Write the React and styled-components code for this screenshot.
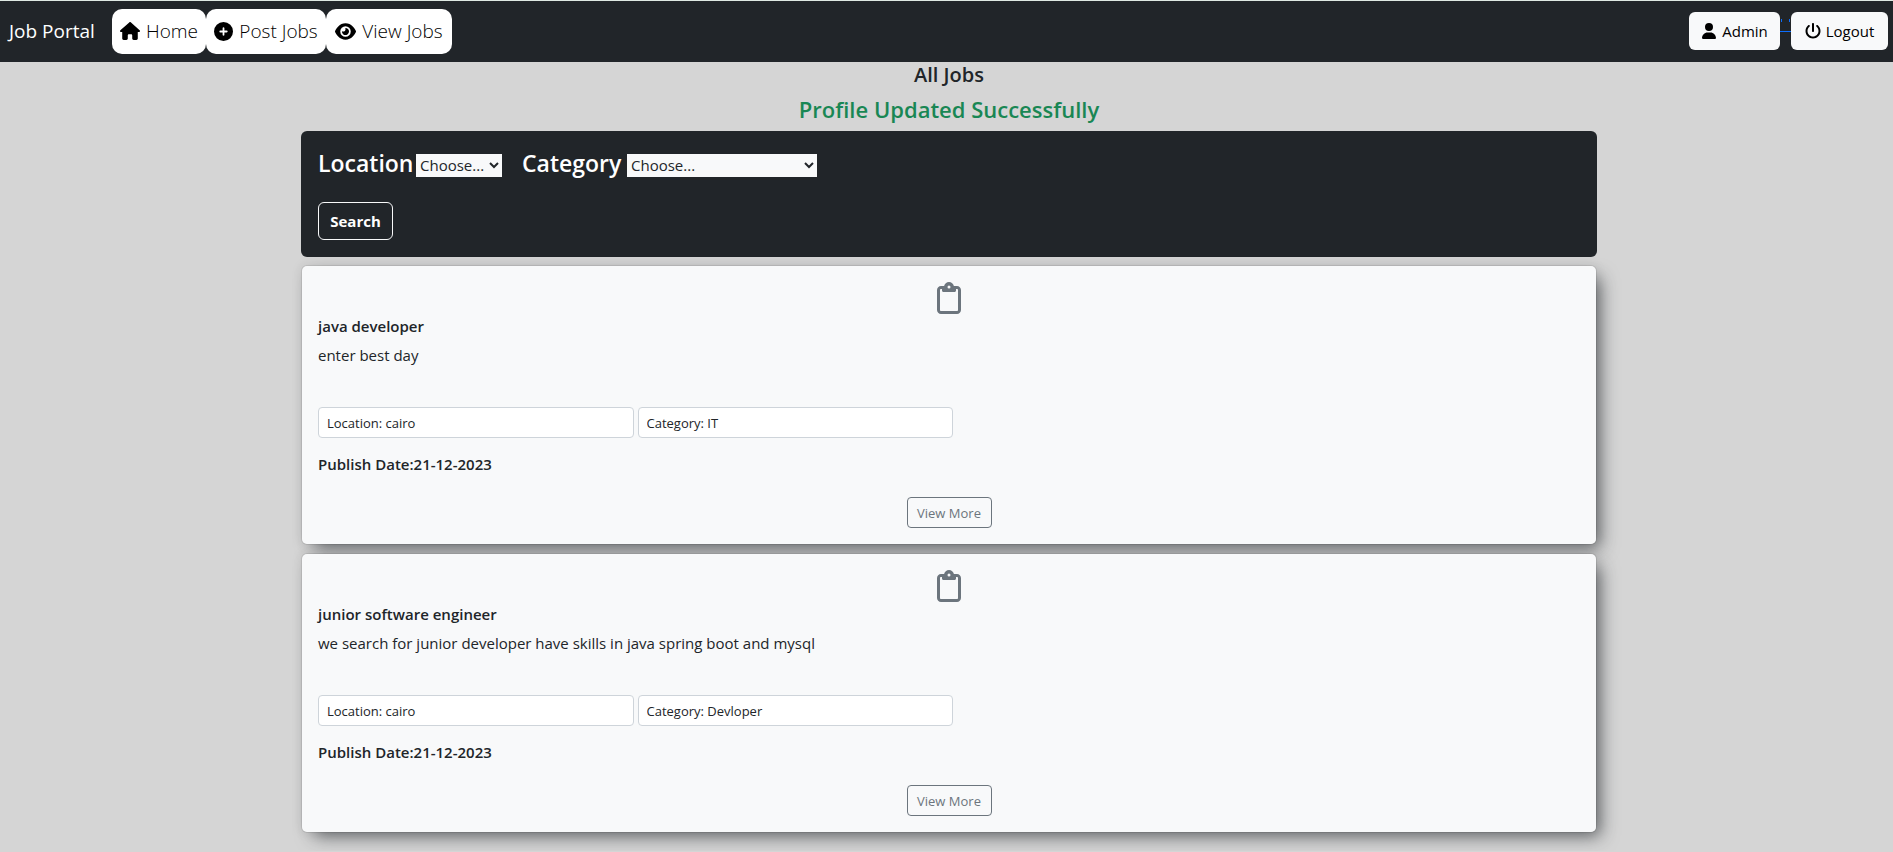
import React from "react";
import styled, { createGlobalStyle, css } from "styled-components";
import { FaHouse, FaCirclePlus, FaEye, FaUser, FaPowerOff, FaRegClipboard } from "react-icons/fa6";

const GlobalStyle = createGlobalStyle`
  *, *::before, *::after { box-sizing: border-box; }
  body {
    margin: 0;
    background: #d5d5d5;
    color: #212529;
    font-family: "Segoe UI", "Open Sans", "Noto Sans", sans-serif;
    font-size: 15px;
    line-height: 24px;
  }
  h1, h2, h3, p { margin: 0; }
  button, input, select { font: inherit; color: inherit; }
`;

const NavBar = styled.nav`
  display: flex;
  align-items: center;
  height: 62px;
  padding: 0 5px 1px 9px;
  background: #212529;
  border-top: 1px solid #dfe9e3;
`;

const Brand = styled.a`
  width: 103px;
  color: #fff;
  font-size: 19px;
  white-space: nowrap;
  text-decoration: none;
`;

const NavLinks = styled.div`
  display: flex;
`;

const NavLink = styled.a`
  display: flex;
  align-items: center;
  justify-content: center;
  gap: 6px;
  width: ${(p) => p.$width}px;
  height: 45px;
  border-radius: 10px;
  background: #fff;
  color: #000;
  font-size: 19px;
  font-weight: 300;
  white-space: nowrap;
  text-decoration: none;
`;

const UserActions = styled.div`
  display: flex;
  align-items: center;
  margin-left: auto;
`;

const UserButton = styled.button`
  display: flex;
  align-items: center;
  justify-content: center;
  gap: 5px;
  width: ${(p) => p.$width}px;
  height: 38px;
  padding: 0;
  border: 0;
  border-radius: 6px;
  background: #f8f9fa;
  color: #000;
`;

const Main = styled.main`
  padding-left: 5px;
`;

const Container = styled.div`
  display: flex;
  flex-direction: column;
  gap: 8px;
  max-width: 1296px;
  margin: 0 auto;
  padding: 1px 0 18px;
`;

const PageTitle = styled.h1`
  font-size: 20px;
  font-weight: 600;
  line-height: 24px;
  text-align: center;
`;

const Notice = styled.h2`
  color: #198754;
  font-size: 22px;
  font-weight: 600;
  line-height: 28px;
  text-align: center;
`;

const FilterPanel = styled.form`
  padding: 17px;
  border-radius: 6px;
  background: #212529;
  color: #fff;
`;

const FilterRow = styled.div`
  display: flex;
  align-items: center;
  gap: 20px;
  height: 30px;
  margin-bottom: 24px;
`;

const Field = styled.div`
  display: flex;
  align-items: center;
  gap: 6px;
`;

const FieldLabel = styled.label`
  width: ${(p) => p.$width}px;
  font-size: 23px;
  font-weight: 600;
  line-height: 30px;
  white-space: nowrap;
`;

const Select = styled.select`
  width: ${(p) => p.$width}px;
  height: 23px;
  margin-top: 4px;
  padding: 0;
  border: 0;
  border-radius: 0;
  background: #f8f9fa;
  color: #212529;
`;

const SearchButton = styled.button`
  width: 75px;
  height: 38px;
  padding: 0;
  border: 1px solid #f8f9fa;
  border-radius: 6px;
  background: transparent;
  color: #fff;
  font-weight: 700;
`;

const Card = styled.article`
  display: flex;
  flex-direction: column;
  padding: 16px;
  border: 1px solid rgba(0, 0, 0, 0.08);
  border-radius: 6px;
  background: #f8f9fa;
  background-clip: padding-box;
  box-shadow:
    8px 8px 18px -5px rgba(33, 37, 41, 0.65),
    0 0 12px rgba(0, 0, 0, 0.08);
`;

const CardIcon = styled.div`
  display: flex;
  justify-content: center;
  height: 35px;
  color: #6c757d;
  font-size: 32px;
`;

const strongLine = css`
  font-size: 15px;
  font-weight: 600;
  line-height: 19px;
`;

const JobTitle = styled.h3`
  ${strongLine}
  margin-bottom: 7px;
`;

const Description = styled.p`
  margin-bottom: 40px;
`;

const Details = styled.div`
  display: flex;
  gap: 4px;
  margin-bottom: 17px;
`;

const Detail = styled.input`
  width: 25%;
  height: 31px;
  padding: 4px 8px;
  border: 1px solid #ced4da;
  border-radius: 4px;
  background: #fff;
  font-size: 13px;
`;

const Published = styled.p`
  ${strongLine}
  margin-bottom: 23px;
`;

const ViewMore = styled.button`
  align-self: center;
  width: 85px;
  height: 31px;
  padding: 0;
  border: 1px solid #6c757d;
  border-radius: 4px;
  background: transparent;
  color: #6c757d;
  font-size: 13px;
`;

const jobs = [
  { id: 1, title: "java developer", text: "enter best day", location: "cairo", category: "IT", date: "21-12-2023" },
  {
    id: 2,
    title: "junior software engineer",
    text: "we search for junior developer have skills in java spring boot and mysql",
    location: "cairo",
    category: "Devloper",
    date: "21-12-2023",
  },
];

function LinkTrace() {
  return (
    <svg width="11" height="38" viewBox="0 0 11 38" aria-hidden="true">
      <path d="M0 19.5h11M1.5 7v3M9.5 7v3" stroke="#0d6efd" strokeWidth="1" fill="none" />
    </svg>
  );
}

function JobCard({ job }) {
  return (
    <Card>
      <CardIcon>
        <FaRegClipboard />
      </CardIcon>
      <JobTitle>{job.title}</JobTitle>
      <Description>{job.text}</Description>
      <Details>
        <Detail readOnly aria-label="Location" value={`Location: ${job.location}`} />
        <Detail readOnly aria-label="Category" value={`Category: ${job.category}`} />
      </Details>
      <Published>Publish Date:{job.date}</Published>
      <ViewMore type="button">View More</ViewMore>
    </Card>
  );
}

export default function App() {
  return (
    <>
      <GlobalStyle />
      <NavBar>
        <Brand href="#">Job Portal</Brand>
        <NavLinks>
          <NavLink href="#" $width={94}>
            <FaHouse size={20} />
            Home
          </NavLink>
          <NavLink href="#" $width={120}>
            <FaCirclePlus size={19} />
            Post Jobs
          </NavLink>
          <NavLink href="#" $width={126}>
            <FaEye size={21} />
            View Jobs
          </NavLink>
        </NavLinks>
        <UserActions>
          <UserButton type="button" $width={91}>
            <FaUser size={16} />
            Admin
          </UserButton>
          <LinkTrace />
          <UserButton type="button" $width={97}>
            <FaPowerOff size={16} />
            Logout
          </UserButton>
        </UserActions>
      </NavBar>
      <Main>
        <Container>
          <PageTitle>All Jobs</PageTitle>
          <Notice>Profile Updated Successfully</Notice>
          <FilterPanel>
            <FilterRow>
              <Field>
                <FieldLabel htmlFor="location" $width={92}>Location</FieldLabel>
                <Select id="location" $width={86}>
                  <option>Choose...</option>
                </Select>
              </Field>
              <Field>
                <FieldLabel htmlFor="category" $width={99}>Category</FieldLabel>
                <Select id="category" $width={190}>
                  <option>Choose...</option>
                </Select>
              </Field>
            </FilterRow>
            <SearchButton type="button">Search</SearchButton>
          </FilterPanel>
          {jobs.map((job) => (
            <JobCard key={job.id} job={job} />
          ))}
        </Container>
      </Main>
    </>
  );
}
